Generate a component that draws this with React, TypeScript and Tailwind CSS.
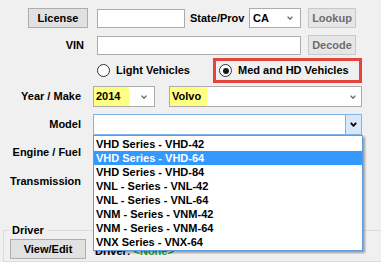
import React from "react";

function Chevron({ dark = false }: { dark?: boolean }) {
  return (
    <svg width={dark ? 7 : 6} height={dark ? 5 : 4} viewBox={dark ? "0 0 7 5" : "0 0 6 4"}>
      <path
        d={dark ? "M0.8 0.8 L3.5 3.8 L6.2 0.8" : "M0.6 0.6 L3 3.2 L5.4 0.6"}
        fill="none"
        stroke={dark ? "#000" : "#6a6a6a"}
        strokeWidth={dark ? 1.8 : 1.4}
      />
    </svg>
  );
}

function Radio({ checked = false }: { checked?: boolean }) {
  return (
    <span className="w-[13px] h-[13px] rounded-full border border-[#333] bg-white flex items-center justify-center shrink-0">
      {checked && <span className="w-[6px] h-[6px] rounded-full bg-[#1a1a1a]" />}
    </span>
  );
}

export default function App() {
  const models = [
    "VHD Series - VHD-42",
    "VHD Series - VHD-64",
    "VHD Series - VHD-84",
    "VNL - Series - VNL-42",
    "VNL - Series - VNL-64",
    "VNM - Series - VNM-42",
    "VNM - Series - VNM-64",
    "VNX Series - VNX-64",
  ];

  const btn = "h-[20px] border border-[#adadad] bg-[#e1e1e1] flex items-center justify-center";
  const disabledBtn = "h-[20px] border border-[#c8c8c8] bg-[#e6e6e6] text-[#6d6d6d] flex items-center justify-center";
  const label = "w-[81px] text-right shrink-0";

  return (
    <div
      className="w-[381px] h-[262px] overflow-hidden bg-[#f0f0f0] text-black text-[11px] leading-[13px] font-bold"
      style={{ fontFamily: '"Liberation Sans", Arial, sans-serif' }}
    >
      {/* license row */}
      <div className="flex items-center h-[20px] mt-[8px] pl-[28px]">
        <button className={`${btn} w-[60px]`}>License</button>
        <div className="ml-[9px] w-[88px] h-[19px] border border-[#acacac] bg-white" />
        <span className="w-[64px] pl-[5px]">State/Prov</span>
        <div className="w-[52px] h-[20px] border border-[#acacac] bg-white flex items-center justify-between pl-[3px] pr-[7px]">
          <span>CA</span>
          <Chevron />
        </div>
        <button className={`${disabledBtn} ml-[7px] w-[48px]`}>Lookup</button>
      </div>

      {/* vin row */}
      <div className="flex items-center h-[20px] mt-[7px]">
        <span className="w-[84px] text-right">VIN</span>
        <div className="ml-[13px] w-[204px] h-[19px] border border-[#acacac] bg-white" />
        <button className={`${disabledBtn} ml-[7px] w-[48px]`}>Decode</button>
      </div>

      {/* vehicle type */}
      <div className="flex items-center h-[25px] mt-[3px] pl-[97px]">
        <div className="w-[116px] flex items-center gap-[6px]">
          <Radio />
          <span>Light Vehicles</span>
        </div>
        <div className="w-[149px] h-[25px] border-[3px] border-[#e5443b] flex items-center gap-[6px] pl-[3px]">
          <Radio checked />
          <span>Med and HD Vehicles</span>
        </div>
      </div>

      {/* year / make */}
      <div className="flex items-center h-[21px] mt-[3px]">
        <span className={label}>Year / Make</span>
        <div className="ml-[12px] w-[62px] h-[21px] border border-[#acacac] bg-white flex items-center justify-between pr-[7px]">
          <span className="w-[35px] h-full bg-[#ffff80] pl-[2px] flex items-center">2014</span>
          <Chevron />
        </div>
        <div className="ml-[14px] w-[193px] h-[21px] border border-[#acacac] bg-white flex items-center justify-between pr-[5px]">
          <span className="w-[37px] h-full bg-[#ffff80] pl-[2px] flex items-center">Volvo</span>
          <Chevron />
        </div>
      </div>

      {/* model */}
      <div className="flex items-center h-[21px] mt-[7px]">
        <span className={label}>Model</span>
        <div className="relative ml-[12px] w-[269px] h-[21px] border border-[#7eb4ea] bg-white flex justify-end">
          <div className="w-[16px] h-full border-l border-[#7eb4ea] bg-[#d9e8f9] flex items-center justify-center">
            <Chevron dark />
          </div>
          <ul className="absolute left-[-1px] top-[20px] w-[270px] py-[1px] border border-[#5d9ddf] bg-white z-10 shadow-[2px_2px_2px_rgba(0,0,0,0.35)]">
            {models.map((m, i) => (
              <li
                key={m}
                className={`h-[14px] pl-[2px] flex items-center ${i === 1 ? "bg-[#3399ff] text-white" : ""}`}
              >
                {m}
              </li>
            ))}
          </ul>
        </div>
      </div>

      <div className="flex items-center h-[21px] mt-[7px]">
        <span className={label}>Engine / Fuel</span>
      </div>
      <div className="flex items-center h-[21px] mt-[8px]">
        <span className={label}>Transmission</span>
      </div>

      {/* driver group */}
      <fieldset className="mt-[32px] ml-[3px] w-[400px] border border-[#dcdcdc] p-0">
        <legend className="ml-[5px] px-[3px]">Driver</legend>
        <div className="flex items-start pl-[6px] pt-[2px] pb-[2px]">
          <button className={`${btn} w-[76px] h-[19px]`}>View/Edit</button>
          <span className="ml-[9px] mt-[6px]">
            Driver: <span className="text-[#22a33a]">&lt;None&gt;</span>
          </span>
        </div>
      </fieldset>
    </div>
  );
}
